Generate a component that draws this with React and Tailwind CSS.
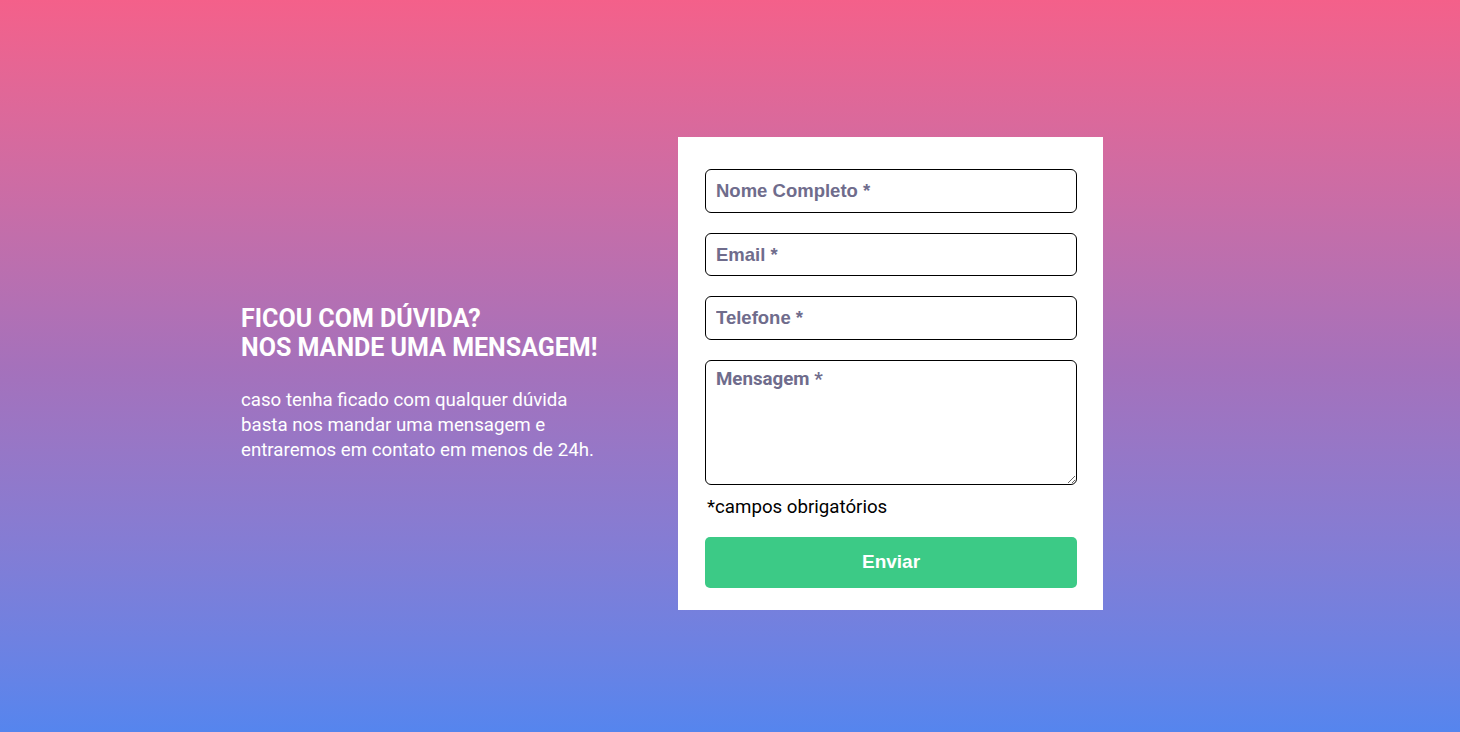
import React from 'react';

const inputBase =
  "w-full rounded-[6px] border border-black bg-white px-[10px] text-[18.5px] font-bold text-black outline-none placeholder:text-[#6f6c8c] [font-family:'Liberation_Sans',Arial,sans-serif]";

export default function App() {
  return (
    <div className="min-h-[732px] w-full bg-gradient-to-b from-[#f4608a] via-[#a571bb] to-[#5585ee] [font-family:Roboto,sans-serif]">
      <div className="flex items-start pl-[241px] pt-[137px]">
        <div className="mt-[167px] w-[437px] text-white">
          <h2 className="text-[25px] font-bold uppercase leading-[29px]">
            Ficou com dúvida?
            <br />
            Nos mande uma mensagem!
          </h2>
          <p className="mt-[26px] text-[18.7px] leading-[25px]">
            caso tenha ficado com qualquer dúvida
            <br />
            basta nos mandar uma mensagem e
            <br />
            entraremos em contato em menos de 24h.
          </p>
        </div>

        <form
          className="flex w-[425px] flex-col bg-white pb-[22px] pl-[27px] pr-[26px] pt-[32px]"
          onSubmit={(e) => e.preventDefault()}
        >
          <input className={`${inputBase} h-[44px]`} placeholder="Nome Completo *" />
          <input className={`${inputBase} mt-[20px] h-[43px]`} placeholder="Email *" />
          <input className={`${inputBase} mt-[20px] h-[44px]`} placeholder="Telefone *" />
          <textarea
            className="mt-[20px] h-[125px] w-full rounded-[6px] border border-black bg-white px-[10px] py-[5px] text-[18.7px] font-bold leading-[26px] text-black outline-none placeholder:text-[#6f6c8c]"
            placeholder="Mensagem *"
          ></textarea>
          <p className="mt-[10px] pl-[2px] text-[18.7px] leading-[24px] text-black">*campos obrigatórios</p>
          <button
            type="submit"
            className="mt-[18px] h-[51px] w-full rounded-[5px] bg-[#3cca86] text-[19px] font-bold text-white [font-family:'Liberation_Sans',Arial,sans-serif]"
          >
            Enviar
          </button>
        </form>
      </div>
    </div>
  );
}
